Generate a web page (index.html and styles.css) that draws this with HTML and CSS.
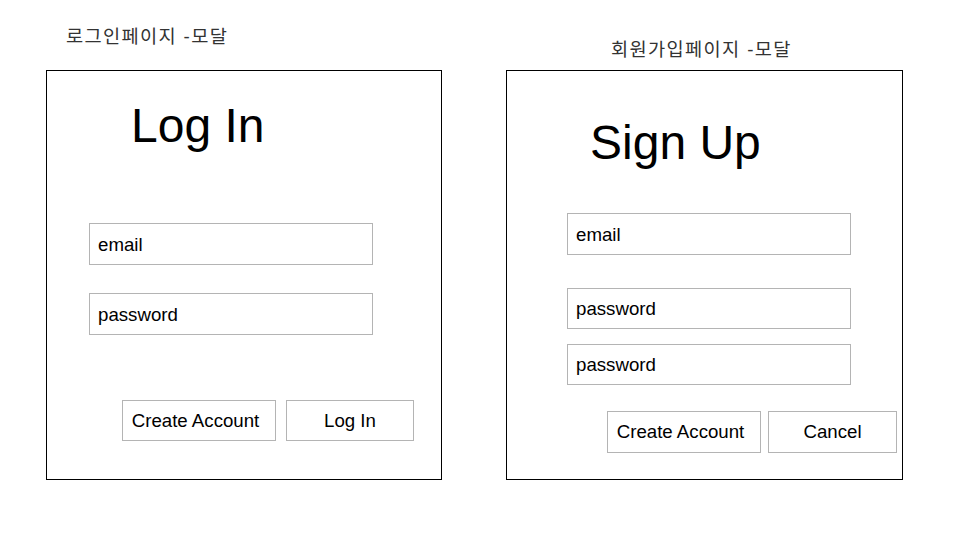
FILE: index.html
```html
<!DOCTYPE html>
<html lang="ko">
<head>
<meta charset="utf-8">
<title>모달 와이어프레임</title>
<link rel="stylesheet" href="styles.css">
</head>
<body>
<div class="slide">
  <section class="panel panel-login">
    <div class="label">로그인페이지 -모달</div>
    <div class="modal">
      <div class="title">Log In</div>
      <div class="field field-email">email</div>
      <div class="field field-pass">password</div>
      <div class="actions">
        <div class="btn btn-create">Create Account</div>
        <div class="btn btn-main">Log In</div>
      </div>
    </div>
  </section>
  <section class="panel panel-signup">
    <div class="label">회원가입페이지 -모달</div>
    <div class="modal">
      <div class="title">Sign Up</div>
      <div class="field field-email">email</div>
      <div class="field field-pass">password</div>
      <div class="field field-pass2">password</div>
      <div class="actions">
        <div class="btn btn-create">Create Account</div>
        <div class="btn btn-main">Cancel</div>
      </div>
    </div>
  </section>
</div>
</body>
</html>
```
FILE: styles.css
```css
html, body {
  margin: 0;
  padding: 0;
  background: #ffffff;
}
body {
  font-family: "Liberation Sans", Arial, "Noto Sans CJK KR", sans-serif;
  color: #000;
  width: 960px;
  height: 540px;
  overflow: hidden;
}
.slide {
  display: flex;
  padding-left: 46px;
  gap: 64px;
}
.panel {
  display: flex;
  flex-direction: column;
}
.label {
  font-family: "Liberation Sans", "Noto Sans CJK KR", sans-serif;
  font-size: 18.67px;
  line-height: 24px;
  height: 24px;
  letter-spacing: 1.35px;
  color: #333;
  white-space: nowrap;
}
.panel-login .label {
  margin: 25px 0 21px 20px;
}
.panel-signup .label {
  margin: 38px 0 8px 105px;
}
.modal {
  box-sizing: border-box;
  height: 410px;
  border: 1px solid #000;
  display: flex;
  flex-direction: column;
  align-items: flex-start;
}
.panel-login .modal { width: 396px; }
.panel-signup .modal { width: 397px; }

.title {
  font-size: 48px;
  line-height: 48px;
  height: 48px;
  white-space: nowrap;
}
.panel-login .title { margin: 31px 0 0 84px; }
.panel-signup .title { margin: 48px 0 0 83px; }

.field {
  box-sizing: border-box;
  width: 284px;
  height: 42px;
  border: 1px solid #b4b4b4;
  font-size: 18.67px;
  display: flex;
  align-items: center;
  padding-left: 8px;
  padding-top: 1px;
}
.panel-login .field { margin-left: 42px; }
.panel-login .field-email { margin-top: 73px; }
.panel-login .field-pass { margin-top: 28px; }

.panel-signup .field { margin-left: 60px; }
.panel-signup .field-email { margin-top: 46px; }
.panel-signup .field-pass { margin-top: 33px; height: 41px; }
.panel-signup .field-pass2 { margin-top: 15px; height: 41px; }

.actions {
  display: flex;
}
.panel-login .actions { margin: 65px 0 0 75px; gap: 10px; }
.panel-signup .actions { margin: 26px 0 0 100px; gap: 7px; }

.btn {
  box-sizing: border-box;
  height: 41px;
  border: 1px solid #b4b4b4;
  font-size: 18.67px;
  display: flex;
  align-items: center;
  justify-content: center;
  white-space: nowrap;
}
.panel-signup .btn { height: 42px; }
.btn-create { width: 154px; padding-right: 7px; }
.panel-login .btn-main { width: 128px; }
.panel-signup .btn-main { width: 129px; }
```
